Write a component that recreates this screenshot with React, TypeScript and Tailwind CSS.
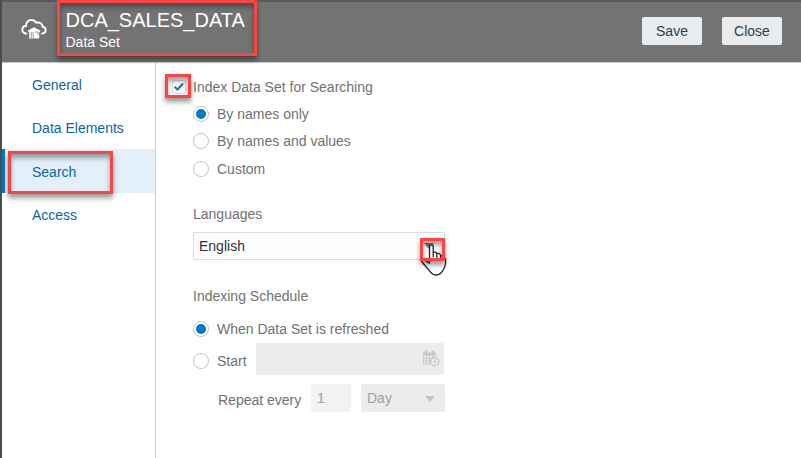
import React from "react";

const callout =
  "pointer-events-none absolute border-[3px] border-[#ff4242] shadow-[0_4px_5px_rgba(0,0,0,0.4),inset_0_4px_5px_rgba(0,0,0,0.36)]";

function Radio({ checked = false }: { checked?: boolean }) {
  return (
    <span className="flex size-4 shrink-0 items-center justify-center rounded-full border border-[#c4c4c4] bg-white">
      {checked && <span className="size-[10px] rounded-full bg-[#0077c8]" />}
    </span>
  );
}

function RadioRow({ label, checked, className }: { label: string; checked?: boolean; className: string }) {
  return (
    <label className={`flex items-center gap-2 ${className}`}>
      <Radio checked={checked} />
      <span>{label}</span>
    </label>
  );
}

function CloudIcon() {
  return (
    <svg className="block" width="26" height="22" viewBox="0 0 26 22" fill="none">
      <path
        d="M5.600 15.600C3 15.600 1.300 14 1.300 11.800c0-2.100 1.500-3.700 3.700-4C4.900 4.400 7.200 2 10.300 2c2.100 0 3.800 1 4.900 2.700 3.600-.9 6.300 1 6.400 4 2 .3 3.100 1.600 3.100 3.400 0 2-1.500 3.400-3.700 3.500"
        stroke="white"
        strokeWidth="1.9"
        strokeLinecap="round"
      />
      <path d="M7 12.600 13 9.300l6.200 3.300v1.200h-1V20.500H8.200v-6.700H7z" fill="white" />
      <path d="M10.300 14v6.500M12.200 14v6.500M14 14h3v3" stroke="#858585" strokeWidth="0.8" />
    </svg>
  );
}

function CalendarClockIcon() {
  return (
    <svg className="block" width="18" height="17" viewBox="0 0 18 17" fill="none">
      <path d="M1 2.500h12.500v3H1z" fill="#c9c9c9" />
      <path d="M3.800.5v4M10.800.5v4" stroke="#c2c2c2" strokeWidth="2" />
      <path d="M1.500 5v9h7M1 8.500h8M1 11h6M4.500 5v9M7.500 5v9M10.500 5v3M13 3v4" stroke="#cacaca" strokeWidth="1.200" />
      <circle cx="12.800" cy="11.800" r="4" fill="#ececec" stroke="#c8c8c8" strokeWidth="1.400" />
      <path d="M12.600 9.500v2.600h2" stroke="#c8c8c8" strokeWidth="1.200" />
    </svg>
  );
}

function HandCursor() {
  return (
    <svg className="absolute left-[420px] top-[243px]" width="27" height="34" viewBox="0 0 27 34" fill="none">
      <path
        d="M9.500 15.500V3.300c0-2 3.700-2 3.700 0v6.200c1-1 3.300-.6 3.600.8 1.400-.8 3.300-.2 3.700 1.100l4.500 4c.6 2 .9 4.500.4 7.500-1.600 5-3.600 9.100-9.100 9.500-3 .2-4.900-1.400-6.500-3.400L1.700 17.500c-.9-1.700 1.600-3.200 3.600-2l4.200 3.500z"
        fill="white"
      />
      <path
        d="M9.500 20.500V3.300c0-2 3.700-2 3.700 0v11M13.200 9.500c1-1 3.600-.6 3.600 1.200v4M16.800 10.700c1.500-.8 3.800-.2 3.800 1.700v3.200M20.600 12.900c2.200-.4 4.200.8 4.700 3 .6 3.100.3 6.500-1.100 9.200-1.800 4.400-4.200 6.700-7.600 6.900-3 .2-4.700-1.100-6.300-3.100L2 19c-1.200-1.800 1-3 2.900-1.700l4.600 3.200"
        stroke="#242430"
        strokeWidth="1.300"
        strokeLinejoin="round"
      />
    </svg>
  );
}

function NavItem({ label, active = false }: { label: string; active?: boolean }) {
  return (
    <a
      className={`flex items-center border-l-[3px] pl-[27px] text-[#0b65a5] ${
        active ? "h-11 border-[#0077c8] bg-[#e3f0fa] pt-0.5" : "h-[43px] border-transparent"
      }`}
    >
      {label}
    </a>
  );
}

export default function App() {
  return (
    <div className="relative flex h-[458px] w-[801px] flex-col overflow-hidden border-l-2 border-[#4c4c4c] bg-white font-['Liberation_Sans',Arial,sans-serif] text-[14px] leading-4 text-[#717171]">
      <header className="flex h-[63px] shrink-0 border-b border-t-2 border-b-[#cccccc] border-t-[#595959] bg-[#737373] text-white">
        <div className="ml-[19px] mt-4">
          <CloudIcon />
        </div>
        <div className="ml-[18.500px] mt-1 flex-1">
          <h1 className="text-[20px] leading-7">DCA_SALES_DATA</h1>
          <p className="text-[14px] leading-4">Data Set</p>
        </div>
        <div className="mr-[19px] mt-[15px] flex gap-5 text-[#333d45]">
          <button className="h-7 w-[60px] rounded-[2px] bg-[#e8ecef]">Save</button>
          <button className="h-7 w-[60px] rounded-[2px] bg-[#e8ecef]">Close</button>
        </div>
      </header>
      <div className="flex flex-1">
        <nav className="w-[154px] border-r border-[#cccccc]">
          <NavItem label="General" />
          <NavItem label="Data Elements" />
          <NavItem label="Search" active />
          <NavItem label="Access" />
        </nav>
        <main className="flex-1 pt-4">
          <label className="ml-4 flex h-4 items-center gap-[7px]">
            <span className="flex size-[14px] items-center justify-center rounded-[2px] border border-[#cfdbe3] bg-white">
              <svg width="12" height="12" viewBox="0 0 12 12" fill="none">
                <path d="m1.500 5.800 3 2.700 5.500-6" stroke="#0077c8" strokeWidth="2" />
              </svg>
            </span>
            <span>Index Data Set for Searching</span>
          </label>
          <div className="ml-[37px] w-[252px]">
            <RadioRow label="By names only" checked className="mt-[11px]" />
            <RadioRow label="By names and values" className="mt-[11px]" />
            <RadioRow label="Custom" className="mt-3" />
            <h2 className="mt-[29px]">Languages</h2>
            <div className="mt-[10px] flex h-7 items-center justify-between rounded-[1px] border border-[#d3dfe6] bg-[#fbfdff] px-[5px] text-[#333333]">
              <span>English</span>
              <span className="mr-[5px] size-0 border-x-[5px] border-t-[6px] border-x-transparent border-t-[#777]" />
            </div>
            <h2 className="mt-7">Indexing Schedule</h2>
            <RadioRow label="When Data Set is refreshed" checked className="mt-[17px]" />
            <div className="mt-1.5 flex h-8 items-center pr-px">
              <RadioRow label="Start" className="mt-[3px]" />
              <div className="ml-auto flex h-8 w-[188px] justify-end rounded-[2px] bg-[#ececec] pr-1 pt-[7px]">
                <CalendarClockIcon />
              </div>
            </div>
            <div className="mt-[9px] flex h-7 items-center">
              <span className="ml-[25px] mt-1 w-[93px]">Repeat every</span>
              <div className="flex h-7 w-10 items-center rounded-[2px] bg-[#f2f2f2] pl-1.5 text-[#a0a0a0]">1</div>
              <div className="ml-[10px] flex h-7 flex-1 items-center justify-between rounded-[2px] bg-[#ececec] pl-1.5 pr-[10px] text-[#a0a0a0]">
                <span>Day</span>
                <span className="mt-px size-0 border-x-[5px] border-t-[6px] border-x-transparent border-t-[#c3c3c3]" />
              </div>
            </div>
          </div>
        </main>
      </div>
      <div className="absolute -left-0.5 top-0 h-[458px] w-[801px]">
        <div className="absolute left-0 top-3 h-px w-0.5 bg-black" />
        <div className="absolute left-0 top-[21px] h-px w-0.5 bg-black" />
        <div className="absolute left-0 top-[60px] h-px w-0.5 bg-black" />
        <div className="absolute left-0 top-[64px] h-px w-0.5 bg-black" />
        <div className="absolute left-0 top-[69px] h-px w-0.5 bg-black" />
        <div className={`${callout} left-[57px] top-0 h-14 w-[200px]`} />
        <div className={`${callout} left-2 top-[151px] h-[43px] w-[105px]`} />
        <div className={`${callout} left-[165px] top-[74px] h-6 w-[26px]`} />
        <HandCursor />
        <div className={`${callout} left-[420px] top-[238px] h-[23px] w-[25px]`} />
      </div>
    </div>
  );
}
